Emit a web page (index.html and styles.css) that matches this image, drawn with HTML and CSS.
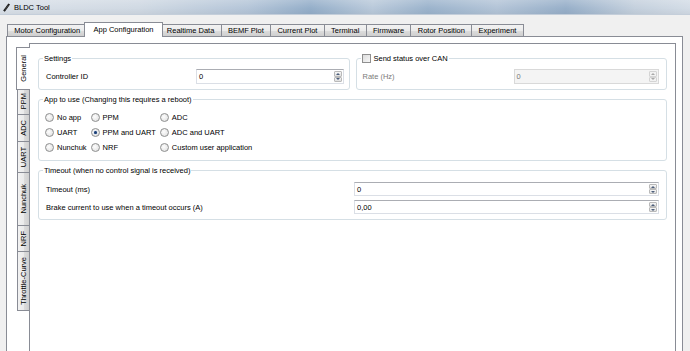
FILE: index.html
```html
<!DOCTYPE html>
<html>
<head>
<meta charset="utf-8">
<title>BLDC Tool</title>
<link rel="stylesheet" href="styles.css">
</head>
<body>
<div class="titlebar">
<svg class="app-icon" width="7" height="9" viewBox="0 0 7 9"><path d="M1 8.2 L6.2 1" stroke="#111" stroke-width="2"/><path d="M1.6 7.4 L5.6 1.8" stroke="#7a7a7a" stroke-width="0.5"/></svg>
<span class="title-text">BLDC Tool</span>
</div>

<div class="tabbar">
<div class="tab">Motor Configuration</div>
<div class="tab tab-sel">App Configuration</div>
<div class="tab">Realtime Data</div>
<div class="tab">BEMF Plot</div>
<div class="tab">Current Plot</div>
<div class="tab">Terminal</div>
<div class="tab">Firmware</div>
<div class="tab">Rotor Position</div>
<div class="tab">Experiment</div>
</div>

<div class="pane">
<div class="vtabs">
<div class="vtab vtab-sel"><span>General</span></div>
<div class="vtab"><span>PPM</span></div>
<div class="vtab"><span>ADC</span></div>
<div class="vtab"><span>UART</span></div>
<div class="vtab vtab-wide"><span>Nunchuk</span></div>
<div class="vtab"><span>NRF</span></div>
<div class="vtab"><span>Throttle-Curve</span></div>
</div>

<div class="page">
<div class="row2">
<fieldset class="group">
<legend>Settings</legend>
<div class="form form-settings">
<span>Controller ID</span>
<div class="spin"><span class="spin-val">0</span><span class="spin-btns"><span class="up"></span><span class="down"></span></span></div>
</div>
</fieldset>

<fieldset class="group">
<legend class="check-legend"><span class="checkbox"></span>Send status over CAN</legend>
<div class="form form-can">
<span class="disabled">Rate (Hz)</span>
<div class="spin spin-off"><span class="spin-val">0</span><span class="spin-btns"><span class="up"></span><span class="down"></span></span></div>
</div>
</fieldset>
</div>

<fieldset class="group">
<legend>App to use (Changing this requires a reboot)</legend>
<div class="radios">
<div class="radio"><span class="dot"></span>No app</div>
<div class="radio"><span class="dot"></span>PPM</div>
<div class="radio"><span class="dot"></span>ADC</div>
<div class="radio"><span class="dot"></span>UART</div>
<div class="radio"><span class="dot dot-on"></span>PPM and UART</div>
<div class="radio"><span class="dot"></span>ADC and UART</div>
<div class="radio"><span class="dot"></span>Nunchuk</div>
<div class="radio"><span class="dot"></span>NRF</div>
<div class="radio"><span class="dot"></span>Custom user application</div>
</div>
</fieldset>

<fieldset class="group group-timeout">
<legend>Timeout (when no control signal is received)</legend>
<div class="form form-timeout">
<span>Timeout (ms)</span>
<div class="spin spin-sm"><span class="spin-val">0</span><span class="spin-btns"><span class="up"></span><span class="down"></span></span></div>
<span>Brake current to use when a timeout occurs (A)</span>
<div class="spin spin-sm"><span class="spin-val">0,00</span><span class="spin-btns"><span class="up"></span><span class="down"></span></span></div>
</div>
</fieldset>
</div>
</div>
</body>
</html>
```

FILE: styles.css
```css
/* BLDC Tool - app configuration page */

body
{ margin: 0;
background: #f0f0f0;
font-family: "Liberation Sans", Arial, sans-serif;
font-size: 7.5px;
line-height: 9px;
color: #000;
overflow: hidden;
height: 351px;
}

/* Title bar */

div.titlebar
{ height: 15px;
display: flex;
align-items: center;
padding-left: 3px;
background:
  linear-gradient(to bottom, rgba(255,255,255,0.2), rgba(255,255,255,0) 60%, rgba(0,0,0,0.04)),
  linear-gradient(to right, #d9e0e8 0%, #d0d9e3 20%, #b4c5d8 36%, #94aec9 45%, #b9c9da 54%, #9bb3cc 62%, #b3c4d7 72%, #97afc9 82%, #c4d0dd 92%, #d3dce6 100%);
border-bottom: 1px solid #c4ceda;
box-sizing: border-box;
}

svg.app-icon
{ margin-right: 4px;
}

/* Top tabs */

div.tabbar
{ display: flex;
align-items: flex-end;
height: 14px;
margin: 7px 0 0 7px;
}

div.tab
{ height: 11px;
padding: 0 6.3px;
border: 1px solid #898c95;
border-bottom: none;
margin-left: -1px;
background: linear-gradient(to bottom, #f2f2f2 0%, #ebebeb 50%, #dddddd 51%, #cfcfcf 100%);
line-height: 11px;
white-space: nowrap;
}

div.tab:first-child
{ margin-left: 0;
}

div.tab-sel
{ height: 14px;
margin: 0 -2px -1px -3px;
padding: 0 8px;
background: #fff;
position: relative;
z-index: 2;
line-height: 13px;
}

/* Tab pane */

div.pane
{ display: flex;
margin: 0 7px 0 6px;
padding: 6px 6px 0 10px;
border: 1px solid #898c95;
background: #fff;
height: 330px;
}

div.vtabs
{ display: flex;
flex-direction: column;
padding-top: 6px;
width: 12px;
}

div.vtab
{ width: 11px;
padding: 5px 0;
border: 1px solid #898c95;
border-right: none;
margin-top: -1px;
background: linear-gradient(to right, #f2f2f2 0%, #ebebeb 50%, #dddddd 51%, #cfcfcf 100%);
display: flex;
justify-content: center;
}

div.vtab-wide
{ padding: 11px 0;
}

div.vtab span
{ writing-mode: vertical-rl;
transform: rotate(180deg);
line-height: 11px;
white-space: nowrap;
}

div.vtab-sel
{ width: 13px;
padding: 7px 0;
margin: -2px -2px -2px -1px;
background: #fff;
position: relative;
z-index: 2;
}

div.page
{ flex: 1;
border: 1px solid #898c95;
padding: 10px 8px;
display: flex;
flex-direction: column;
gap: 5px;
}

div.row2
{ display: grid;
grid-template-columns: 1fr 1fr;
gap: 6px;
}

/* Group boxes */

fieldset.group
{ margin: 0;
min-width: 0;
padding: 6px 0 5px;
border: 1px solid #d5dfe5;
border-radius: 3px;
}

fieldset.group-timeout
{ padding-top: 7px;
}

fieldset.group legend
{ padding: 0 1px;
margin-left: 4px;
line-height: 9px;
}

legend.check-legend
{ display: flex;
align-items: center;
gap: 3px;
}

span.checkbox
{ width: 7px;
height: 7px;
border: 1px solid #8f8f8f;
background: linear-gradient(135deg, #dcdcdc, #f7f7f7);
}

div.form
{ display: grid;
align-items: center;
}

div.form-settings { grid-template-columns: 150px 1fr; padding: 0 5px 0 7px; }
div.form-can { grid-template-columns: 151px 1fr; padding: 0 7px 0 6px; }
div.form-timeout { grid-template-columns: 308px 1fr; row-gap: 4px; padding: 0 7px; }

.disabled
{ color: #7a7a7a;
}

/* Spin boxes */

div.spin
{ display: flex;
height: 15px;
box-sizing: border-box;
border: 1px solid #dbdfe6;
border-top-color: #abadb3;
background: #fff;
}

div.spin-sm
{ height: 14px;
}

span.spin-val
{ flex: 1;
padding-left: 2px;
align-self: center;
}

span.spin-btns
{ display: flex;
flex-direction: column;
width: 8px;
margin: 1px;
}

span.spin-btns span
{ flex: 1;
border: 1px solid #b9b9b9;
border-radius: 1px;
background: linear-gradient(to bottom, #f6f6f6, #dedede);
display: flex;
align-items: center;
justify-content: center;
}

span.spin-btns span.up::after
{ content: "";
border-left: 2px solid transparent;
border-right: 2px solid transparent;
border-bottom: 2px solid #4b5d7a;
}

span.spin-btns span.down::after
{ content: "";
border-left: 2px solid transparent;
border-right: 2px solid transparent;
border-top: 2px solid #4b5d7a;
}

div.spin-off
{ background: #f4f4f4;
border-color: #d9d9d9;
color: #7a7a7a;
}

div.spin-off span.spin-btns span
{ border-color: #d4d4d4;
background: #f2f2f2;
}

div.spin-off span.spin-btns span::after
{ border-top-color: #a8a8a8;
border-bottom-color: #a8a8a8;
}

/* Radio buttons */

div.radios
{ display: grid;
grid-template-columns: auto auto auto;
justify-content: start;
column-gap: 4px;
grid-auto-rows: 15px;
padding: 0 6px;
}

div.radio
{ display: flex;
align-items: center;
gap: 3px;
white-space: nowrap;
}

span.dot
{ width: 7px;
height: 7px;
border: 1px solid #8e8f8f;
border-radius: 50%;
background: radial-gradient(circle at 40% 40%, #fdfdfd, #dcdcdc);
display: flex;
align-items: center;
justify-content: center;
}

span.dot-on::after
{ content: "";
width: 3px;
height: 3px;
border-radius: 50%;
background: #1d3f75;
box-shadow: 0 0 1px #4a78b8;
}
```
